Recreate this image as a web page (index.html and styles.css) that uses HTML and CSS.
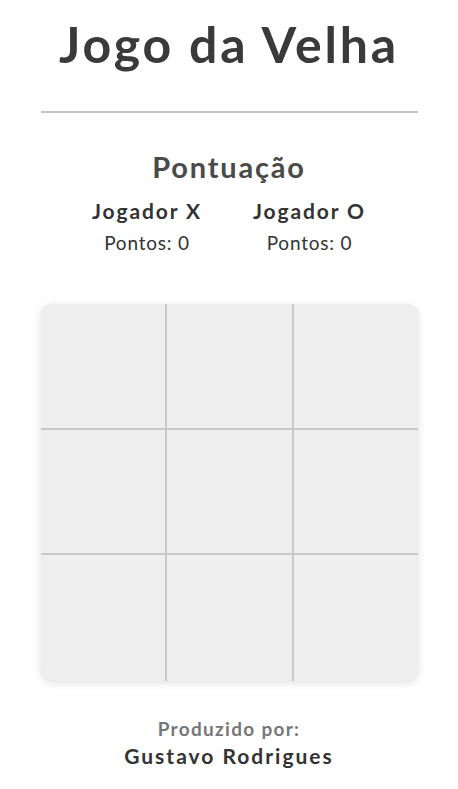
FILE: index.html
```html
<!DOCTYPE html>
<html lang="pt-BR">
<head>
<meta charset="utf-8">
<title>Jogo da Velha</title>
<link rel="stylesheet" href="styles.css">
</head>
<body>
<main class="container">
  <h1 class="title">Jogo da Velha</h1>
  <hr class="divider">
  <section class="score">
    <h2 class="score-title">Pontuação</h2>
    <div class="players">
      <div class="player">
        <h3 class="player-name">Jogador X</h3>
        <p class="player-points">Pontos: 0</p>
      </div>
      <div class="player">
        <h3 class="player-name">Jogador O</h3>
        <p class="player-points">Pontos: 0</p>
      </div>
    </div>
  </section>
  <div class="board">
    <div class="cell"></div><div class="cell"></div><div class="cell"></div>
    <div class="cell"></div><div class="cell"></div><div class="cell"></div>
    <div class="cell"></div><div class="cell"></div><div class="cell"></div>
  </div>
  <footer class="footer">
    <p class="credit-label">Produzido por:</p>
    <p class="credit-name">Gustavo Rodrigues</p>
  </footer>
</main>
</body>
</html>
```
FILE: styles.css
```css
* { box-sizing: border-box; }
html, body { margin: 0; padding: 0; background: #fff; }
body {
  font-family: Lato, "Open Sans", sans-serif;
  color: #3a3a3a;
}
.container {
  width: 377px;
  margin: 0 auto;
  display: flex;
  flex-direction: column;
  align-items: stretch;
  text-align: center;
}
.title {
  margin: 14px 0 0;
  font-size: 50px;
  line-height: 60px;
  font-weight: 700;
  letter-spacing: 2.8px;
  color: #3a3a3a;
}
.divider {
  margin: 37px 0 0;
  border: 0;
  height: 2px;
  background: #c4c4c4;
}
.score-title {
  margin: 36px 0 0;
  font-size: 29px;
  line-height: 36px;
  font-weight: 700;
  letter-spacing: 1.8px;
  color: #4a4a4a;
}
.players {
  display: flex;
  justify-content: center;
  gap: 51px;
  margin-top: 13px;
}
.player { display: flex; flex-direction: column; align-items: center; }
.player-name {
  margin: 0;
  font-size: 21px;
  line-height: 26px;
  font-weight: 700;
  letter-spacing: 1.9px;
  color: #333;
}
.player-points {
  margin: 8px 0 0;
  font-size: 19px;
  line-height: 22px;
  font-weight: 400;
  letter-spacing: 0.8px;
  color: #333;
}
.board {
  margin-top: 50px;
  height: 377px;
  display: grid;
  grid-template-columns: 124px 125px 1fr;
  grid-template-rows: 124px 123px 1fr;
  gap: 2px;
  background: #c8c8c8;
  border-radius: 12px;
  overflow: hidden;
  box-shadow: 0 2px 8px rgba(0,0,0,0.12);
}
.cell { background: #efefef; }
.footer { margin-top: 36px; }
.credit-label {
  margin: 0;
  font-size: 19px;
  line-height: 24px;
  font-weight: 700;
  letter-spacing: 1.3px;
  color: #777;
}
.credit-name {
  margin: 2px 0 0;
  font-size: 21px;
  line-height: 26px;
  font-weight: 700;
  letter-spacing: 2px;
  color: #333;
}
```
